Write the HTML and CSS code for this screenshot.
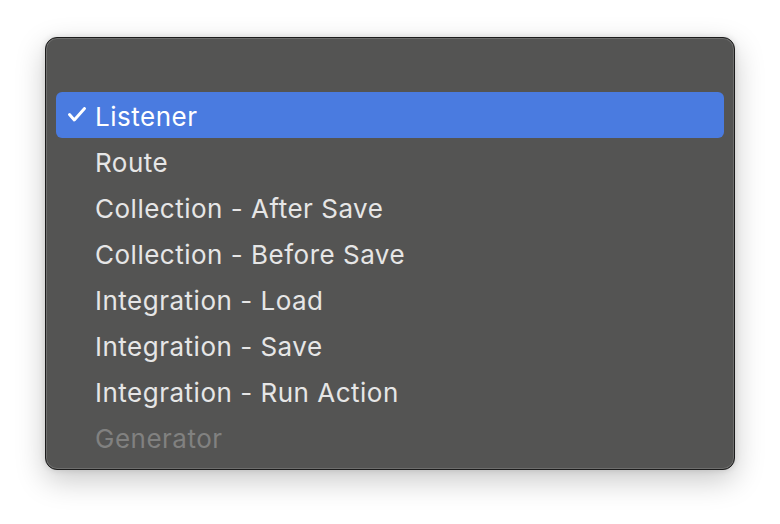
FILE: index.html
```html
<!DOCTYPE html>
<html>
<head>
<meta charset="utf-8">
<link rel="stylesheet" href="styles.css">
</head>
<body>
<div class="menu">
  <div class="item empty"></div>
  <div class="item selected"><span class="check"><svg width="18" height="15" viewBox="0 0 18 15"><path d="M1.5 7.5 L6.3 13 L16.5 1.5" fill="none" stroke="#ffffff" stroke-width="2.9" stroke-linecap="round" stroke-linejoin="round"/></svg></span><span class="label">Listener</span></div>
  <div class="item"><span class="check"></span><span class="label">Route</span></div>
  <div class="item"><span class="check"></span><span class="label">Collection - After Save</span></div>
  <div class="item"><span class="check"></span><span class="label">Collection - Before Save</span></div>
  <div class="item"><span class="check"></span><span class="label">Integration - Load</span></div>
  <div class="item"><span class="check"></span><span class="label">Integration - Save</span></div>
  <div class="item"><span class="check"></span><span class="label">Integration - Run Action</span></div>
  <div class="item disabled"><span class="check"></span><span class="label">Generator</span></div>
</div>
</body>
</html>
```
FILE: styles.css
```css
html, body {
  margin: 0;
  padding: 0;
  background: #ffffff;
  width: 780px;
  height: 524px;
  overflow: hidden;
}
body {
  padding: 37px 0 0 45px;
  box-sizing: border-box;
  font-family: Inter, "Noto Sans", sans-serif;
}
.menu {
  width: 690px;
  height: 433px;
  box-sizing: border-box;
  background: #545453;
  border: 1px solid #1c1c1c;
  border-radius: 12px;
  box-shadow: inset 0 0 0 1px #6e6e6d, 0 10px 30px rgba(0,0,0,0.22), 0 0 6px rgba(0,0,0,0.12);
  padding: 8px 10px;
  display: flex;
  flex-direction: column;
}
.item {
  height: 46px;
  display: flex;
  align-items: center;
  border-radius: 6px;
  color: #e6e6e6;
  font-size: 26px;
  letter-spacing: 0.5px;
  flex-shrink: 0;
}
.item .check {
  width: 39px;
  padding-left: 12px;
  box-sizing: border-box;
  display: flex;
  align-items: center;
  margin-top: -1px;
}
.item .label {
  margin-top: 2px;
}
.item.selected {
  background: #4a7be0;
  color: #ffffff;
}
.item.disabled {
  color: #818180;
}
```
